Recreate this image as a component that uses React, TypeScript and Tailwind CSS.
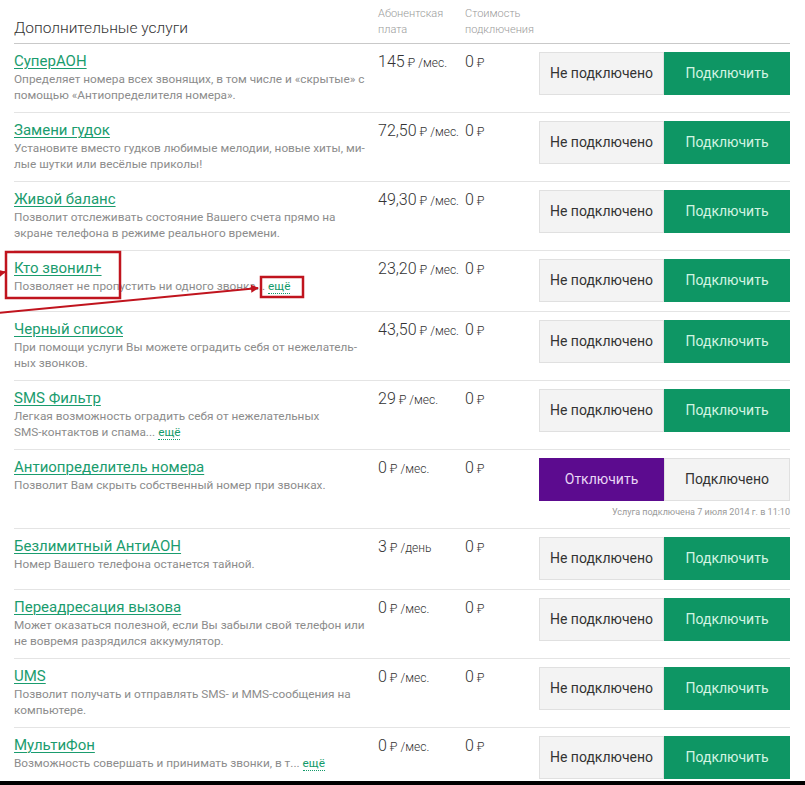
import React from 'react';

interface Service {
  name: string;
  desc: React.ReactNode;
  price: string;
  unit: string;
  cost: string;
  connected?: boolean;
  note?: string;
}

const More = () => (
  <span className="text-[#139a6a] border-b border-dotted border-[#139a6a]">ещё</span>
);

const services: Service[] = [
  {
    name: 'СуперАОН',
    desc: (
      <>
        Определяет номера всех звонящих, в том числе и «скрытые» с<br />
        помощью «Антиопределителя номера».
      </>
    ),
    price: '145',
    unit: '/мес.',
    cost: '0',
  },
  {
    name: 'Замени гудок',
    desc: (
      <>
        Установите вместо гудков любимые мелодии, новые хиты, ми-
        <br />
        лые шутки или весёлые приколы!
      </>
    ),
    price: '72,50',
    unit: '/мес.',
    cost: '0',
  },
  {
    name: 'Живой баланс',
    desc: (
      <>
        Позволит отслеживать состояние Вашего счета прямо на
        <br />
        экране телефона в режиме реального времени.
      </>
    ),
    price: '49,30',
    unit: '/мес.',
    cost: '0',
  },
  {
    name: 'Кто звонил+',
    desc: (
      <>
        Позволяет не пропустить ни одного звонка... <More />
      </>
    ),
    price: '23,20',
    unit: '/мес.',
    cost: '0',
  },
  {
    name: 'Черный список',
    desc: (
      <>
        При помощи услуги Вы можете оградить себя от нежелатель-
        <br />
        ных звонков.
      </>
    ),
    price: '43,50',
    unit: '/мес.',
    cost: '0',
  },
  {
    name: 'SMS Фильтр',
    desc: (
      <>
        Легкая возможность оградить себя от нежелательных
        <br />
        SMS-контактов и спама... <More />
      </>
    ),
    price: '29',
    unit: '/мес.',
    cost: '0',
  },
  {
    name: 'Антиопределитель номера',
    desc: 'Позволит Вам скрыть собственный номер при звонках.',
    price: '0',
    unit: '/мес.',
    cost: '0',
    connected: true,
    note: 'Услуга подключена 7 июля 2014 г. в 11:10',
  },
  {
    name: 'Безлимитный АнтиАОН',
    desc: 'Номер Вашего телефона останется тайной.',
    price: '3',
    unit: '/день',
    cost: '0',
  },
  {
    name: 'Переадресация вызова',
    desc: (
      <>
        Может оказаться полезной, если Вы забыли свой телефон или
        <br />
        не вовремя разрядился аккумулятор.
      </>
    ),
    price: '0',
    unit: '/мес.',
    cost: '0',
  },
  {
    name: 'UMS',
    desc: (
      <>
        Позволит получать и отправлять SMS- и MMS-сообщения на
        <br />
        компьютере.
      </>
    ),
    price: '0',
    unit: '/мес.',
    cost: '0',
  },
  {
    name: 'МультиФон',
    desc: (
      <>
        Возможность совершать и принимать звонки, в т... <More />
      </>
    ),
    price: '0',
    unit: '/мес.',
    cost: '0',
  },
];

const Annotations = () => (
  <svg className="absolute inset-0 pointer-events-none" width="805" height="785">
    <defs>
      <marker id="head" markerWidth="8" markerHeight="8" refX="7" refY="4" orient="auto" markerUnits="userSpaceOnUse">
        <path d="M0,0 L8,4 L0,8 Z" fill="#c0141e" />
      </marker>
    </defs>
    <rect x="6" y="252" width="114" height="46" fill="none" stroke="#c0141e" strokeWidth="2.5" />
    <rect x="261" y="277" width="42" height="20" fill="none" stroke="#c0141e" strokeWidth="2.5" />
    <line x1="-2" y1="313" x2="258" y2="288" stroke="#c0141e" strokeWidth="2" markerEnd="url(#head)" />
    <line x1="-4" y1="274" x2="5" y2="272" stroke="#c0141e" strokeWidth="2" markerEnd="url(#head)" />
  </svg>
);

const Row = ({ s, first }: { s: Service; first: boolean }) => (
  <div
    className={`grid grid-cols-[364px_87px_74px_251px] border-t pt-[8px] pb-[9px] ${
      first ? 'border-[#c9c9c9]' : 'border-[#e4e4e4]'
    }`}
  >
    <div>
      <div className="text-[15px] leading-[19px] text-[#1a9c6e] underline underline-offset-2 decoration-1">
        {s.name}
      </div>
      <div className="text-[11.8px] leading-[16px] text-[#8c8c8c]">{s.desc}</div>
    </div>
    <div className="text-[#333] leading-[19px] font-light whitespace-nowrap">
      <span className="text-[16px]">{s.price}</span>
      <span className="text-[12px]"> ₽ </span>
      <span className="text-[12px]">{s.unit}</span>
    </div>
    <div className="text-[#333] leading-[19px] font-light">
      <span className="text-[16px]">{s.cost}</span>
      <span className="text-[12px]"> ₽</span>
    </div>
    <div>
      {s.connected ? (
        <div className="flex h-[43px] text-[14px]">
          <div className="w-[125px] bg-[#5c0b8f] text-[#e8d6f5] flex items-center justify-center">Отключить</div>
          <div className="w-[126px] bg-[#f3f3f3] border border-[#e0e0e0] text-[#333] flex items-center justify-center">
            Подключено
          </div>
        </div>
      ) : (
        <div className="flex h-[43px] text-[14px]">
          <div className="w-[125px] bg-[#f3f3f3] border border-[#e0e0e0] text-[#333] flex items-center justify-center">
            Не подключено
          </div>
          <div className="w-[126px] bg-[#0e9664] text-[#d2f4e2] flex items-center justify-center">Подключить</div>
        </div>
      )}
      {s.note && (
        <div className="mt-[4px] text-[9px] leading-[14px] text-[#9a9a9a] text-right whitespace-nowrap">{s.note}</div>
      )}
    </div>
  </div>
);

export default function App() {
  return (
    <div
      className="relative w-[805px] h-[785px] overflow-hidden bg-white border-b-4 border-black"
      style={{ fontFamily: 'Roboto, "Liberation Sans", sans-serif' }}
    >
      <div className="pl-[14px] pr-[15px]">
        <div className="grid grid-cols-[364px_87px_74px_251px] h-[43px]">
          <div className="flex items-end pb-[5px] text-[15.5px] leading-[20px] text-[#333] font-light">
            Дополнительные услуги
          </div>
          <div className="pt-[6px] text-[11px] leading-[16px] text-[#9a9a9a] font-light">
            Абонентская
            <br />
            плата
          </div>
          <div className="pt-[6px] text-[11px] leading-[16px] text-[#9a9a9a] font-light">
            Стоимость
            <br />
            подключения
          </div>
          <div />
        </div>
        {services.map((s, i) => (
          <Row key={s.name} s={s} first={i === 0} />
        ))}
      </div>
      <Annotations />
    </div>
  );
}
